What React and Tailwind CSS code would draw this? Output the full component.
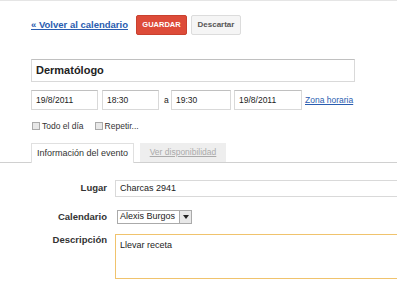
export default function App() {
  const font = { fontFamily: '"Liberation Sans", Arial, sans-serif' };
  return (
    <div style={font} className="w-[397px] h-[290px] overflow-hidden bg-white border-t border-[#e5e5e5] text-[#222]">
      {/* header */}
      <div className="flex items-center pl-[31px] pt-[14px] h-[34px]">
        <a className="text-[9.5px] font-bold text-[#2a5db0] underline leading-none">« Volver al calendario</a>
        <div className="ml-[8px] w-[51px] h-[20px] flex items-center justify-center bg-[#dd4b39] border border-[#c9412f] rounded-[2px] text-white text-[7.5px] font-bold">GUARDAR</div>
        <div className="ml-[4px] w-[50px] h-[20px] flex items-center justify-center bg-[#f5f5f5] border border-[#dcdcdc] rounded-[2px] text-[#555] text-[8px] font-bold">Descartar</div>
      </div>
      {/* title */}
      <div className="pl-[31px] mt-[24px]">
        <div className="w-[324px] h-[23px] border border-[#d9d9d9] border-t-[#c0c0c0] flex items-center pl-[4px] text-[11px] font-bold text-[#222]">Dermatólogo</div>
      </div>
      {/* date row */}
      <div className="pl-[31px] mt-[8px] flex items-center h-[20px] text-[8.5px]">
        <div className="w-[67px] h-[20px] border border-[#d9d9d9] border-t-[#c0c0c0] flex items-center pl-[4px]">19/8/2011</div>
        <div className="ml-[4px] w-[57px] h-[20px] border border-[#d9d9d9] border-t-[#c0c0c0] flex items-center pl-[4px]">18:30</div>
        <span className="ml-[5px] w-[7px]">a</span>
        <div className="ml-[0px] w-[60px] h-[20px] border border-[#d9d9d9] border-t-[#c0c0c0] flex items-center pl-[4px]">19:30</div>
        <div className="ml-[3px] w-[68px] h-[20px] border border-[#d9d9d9] border-t-[#c0c0c0] flex items-center pl-[4px]">19/8/2011</div>
        <a className="ml-[3px] text-[#2a5db0] underline">Zona horaria</a>
      </div>
      {/* checkboxes */}
      <div className="pl-[32px] mt-[10px] flex items-center h-[12px] text-[8.5px] text-[#333]">
        <span className="w-[8px] h-[8px] border border-[#aaa] bg-[#e8e8e8] inline-block" />
        <span className="ml-[2px]">Todo el día</span>
        <span className="ml-[11px] w-[8px] h-[8px] border border-[#aaa] bg-[#e8e8e8] inline-block" />
        <span className="ml-[2px]">Repetir...</span>
      </div>
      {/* tabs */}
      <div className="mt-[11px] border-b border-[#d0d0d0] flex items-end pl-[31px] h-[20px]">
        <div className="w-[103px] h-[20px] border border-[#e0e0e0] border-b-0 bg-white flex items-center justify-center text-[9px] text-[#333] -mb-px">Información del evento</div>
        <div className="ml-[6px] w-[86px] h-[19px] bg-[#eeeeee] flex items-center justify-center text-[8.5px] text-[#aaa] underline">Ver disponibilidad</div>
      </div>
      {/* form */}
      <div className="mt-[17px] grid grid-cols-[107px_1fr] gap-x-[8px]">
        <div className="h-[17px] flex items-center justify-end text-[9.5px] font-bold text-[#333]">Lugar</div>
        <div className="h-[17px] border border-[#d9d9d9] border-r-0 flex items-center pl-[4px] text-[9px]">Charcas 2941</div>

        <div className="mt-[13px] h-[14px] flex items-center justify-end text-[9.5px] font-bold text-[#333]">Calendario</div>
        <div className="mt-[13px] pl-[2px]">
          <div className="w-[75px] h-[14px] border border-[#aaa] flex items-center text-[9px] bg-white">
            <span className="pl-[2px] flex-1">Alexis Burgos</span>
            <span className="w-[12px] h-[12px] border-l border-[#aaa] bg-[#e8e8e8] flex items-center justify-center">
              <svg width="6" height="4" viewBox="0 0 6 4"><path d="M0 0h6L3 4z" fill="#222" /></svg>
            </span>
          </div>
        </div>

        <div className="mt-[10px] flex justify-end text-[9.5px] font-bold text-[#333] leading-[12px]">Descripción</div>
        <div className="mt-[10px] h-[45px] border border-[#f0c36d] border-r-0 pl-[4px] pt-[4px] text-[9px]">Llevar receta</div>
      </div>
    </div>
  );
}
